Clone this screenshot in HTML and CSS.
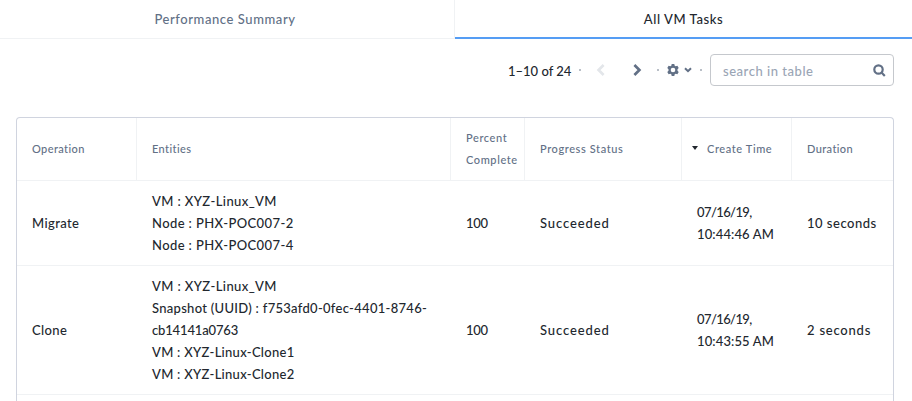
FILE: index.html
```
<!DOCTYPE html>
<html lang="en">
<head>
<meta charset="utf-8">
<title>All VM Tasks</title>
<link rel="stylesheet" href="styles.css">
</head>
<body>
<nav class="tabs">
  <a class="tab">Performance Summary</a>
  <a class="tab active">All VM Tasks</a>
</nav>
<div class="toolbar">
  <span class="range">1–10 of 24</span>
  <i class="dot dot-a"></i>
  <svg class="prev" width="10" height="14" viewBox="0 0 10 14"><path d="M7.6 2 2.6 7l5 5"/></svg>
  <svg class="next" width="10" height="14" viewBox="0 0 10 14"><path d="m2.4 2 5 5-5 5"/></svg>
  <i class="dot dot-b"></i>
  <svg class="gear" width="12" height="12" viewBox="0 0 12 12"><path fill-rule="evenodd" d="M4.7 0h2.6l.4 1.7 1 .6 1.7-.5L11.7 4l-1.2 1.3v1.4L11.7 8l-1.3 2.2-1.7-.5-1 .6-.4 1.7H4.7l-.4-1.7-1-.6-1.7.5L.3 8l1.2-1.3V5.300L.3 4l1.300-2.200 1.700.5 1-.6zM6 3.700a2.300 2.300 0 1 0 0 4.600 2.300 2.300 0 0 0 0-4.600z"/></svg>
  <svg class="caret" width="8" height="6" viewBox="0 0 8 6"><path d="m1 1.200 3 3 3-3"/></svg>
  <i class="dot dot-c"></i>
  <div class="search">
    <span class="placeholder">search in table</span>
    <svg class="lens" width="13" height="13" viewBox="0 0 13 13"><circle cx="5.500" cy="5.500" r="4.200"/><path d="m8.500 8.500 3.300 3.400"/></svg>
  </div>
</div>
<div class="table">
  <div class="row head">
    <div class="cell"><span class="short">Operation</span></div>
    <div class="cell"><span class="short">Entities</span></div>
    <div class="cell"><span>Percent</span><span>Complete</span></div>
    <div class="cell"><span>Progress Status</span></div>
    <div class="cell sorted"><i class="sort"></i><span>Create Time</span></div>
    <div class="cell"><span class="short">Duration</span></div>
  </div>
  <div class="row">
    <div class="cell"><span>Migrate</span></div>
    <div class="cell"><span class="vm">VM : XYZ-Linux_VM</span><span class="node">Node : PHX-POC007-2</span><span class="node">Node : PHX-POC007-4</span></div>
    <div class="cell"><span class="pct">100</span></div>
    <div class="cell"><span class="status">Succeeded</span></div>
    <div class="cell"><span class="date">07/16/19,</span><span class="time">10:44:46 AM</span></div>
    <div class="cell"><span class="dur">10 seconds</span></div>
  </div>
  <div class="row last">
    <div class="cell"><span>Clone</span></div>
    <div class="cell"><span class="vm">VM : XYZ-Linux_VM</span><span class="snap">Snapshot (UUID) : f753afd0-0fec-4401-8746-</span><span class="uuid">cb14141a0763</span><span class="clone">VM : XYZ-Linux-Clone1</span><span class="clone">VM : XYZ-Linux-Clone2</span></div>
    <div class="cell"><span class="pct">100</span></div>
    <div class="cell"><span class="status">Succeeded</span></div>
    <div class="cell"><span class="date">07/16/19,</span><span class="time">10:43:55 AM</span></div>
    <div class="cell"><span class="dur-short">2 seconds</span></div>
  </div>
</div>
</body>
</html>
```
FILE: styles.css
```
* { box-sizing: border-box; }
body {
  margin: 0;
  background: #fff;
  color: #22272e;
  font: 500 13px/22px Lato, "Liberation Sans", sans-serif;
  letter-spacing: .4px;
}
svg { display: block; flex: none; fill: none; stroke: #627086; }
.tabs { display: grid; grid-template-columns: 455px 457px; height: 39px; }
.tab {
  display: flex;
  align-items: center;
  justify-content: center;
  padding-right: 4px;
  color: #627086;
  letter-spacing: .58px;
  border-right: 1px solid #f0f2f4;
  border-bottom: 1px solid #f0f2f4;
}
.tab.active { color: #22272e; border-right: 0; border-bottom: 2px solid #559df4; padding: 1px 0 0; }
.toolbar { display: flex; align-items: center; height: 32px; margin-top: 15px; padding-left: 508px; }
.range { width: 71px; white-space: nowrap; letter-spacing: 0; padding-top: 1px; }
.dot { flex: none; width: 2px; height: 2px; background: #a2aab5; border-radius: 1px; }
.prev { margin-left: 15px; stroke: #e3e6ea; stroke-width: 2.7; }
.next { margin-left: 26px; stroke-width: 2.7; }
.dot-b { margin-left: 15px; }
.gear { margin-left: 8px; fill: #627086; stroke: none; }
.caret { margin-left: 5px; stroke-width: 2; }
.dot-c { margin-left: 8px; }
.search {
  display: flex;
  align-items: center;
  justify-content: space-between;
  width: 184px;
  height: 32px;
  margin-left: 8px;
  padding: 0 7px 0 12px;
  border: 1px solid #c5c8cd;
  border-radius: 4px;
}
.placeholder { color: #9aa5b5; padding-top: 2px; letter-spacing: .53px; }
.lens { stroke-width: 2.2; }
.table {
  width: 878px;
  height: 284px;
  margin: 31px 0 0 16px;
  border: 1px solid #d0d4df;
  border-bottom: 0;
  border-radius: 4px 4px 0 0;
}
.row {
  display: grid;
  grid-template-columns: 120px 314px 74px 157px 110px 101px;
  border-bottom: 1px solid #f0f2f4;
}
.last { height: 129px; }
.cell {
  display: flex;
  flex-direction: column;
  justify-content: center;
  align-items: flex-start;
  padding: 9px 0 9px 15px;
  white-space: nowrap;
}
.head { color: #627086; font-size: 11px; height: 63px; letter-spacing: .6px; }
.head .cell { border-right: 1px solid #f0f2f4; }
.head .cell:last-child { border-right: 0; }
.head .sorted { flex-direction: row; justify-content: flex-start; align-items: center; padding-left: 10px; gap: 9px; }
.short { letter-spacing: .4px; }
.sort { border: 3px solid transparent; border-top: 4px solid #22272e; border-bottom: 0; margin-bottom: 2px; }
.pct { letter-spacing: -.3px; }
.status { letter-spacing: .9px; }
.date { letter-spacing: -.6px; }
.time { letter-spacing: .12px; }
.snap { letter-spacing: .29px; }
.uuid { letter-spacing: -.15px; }
.clone { letter-spacing: .28px; }
.dur { letter-spacing: .5px; }
.dur-short { letter-spacing: .78px; }
```
